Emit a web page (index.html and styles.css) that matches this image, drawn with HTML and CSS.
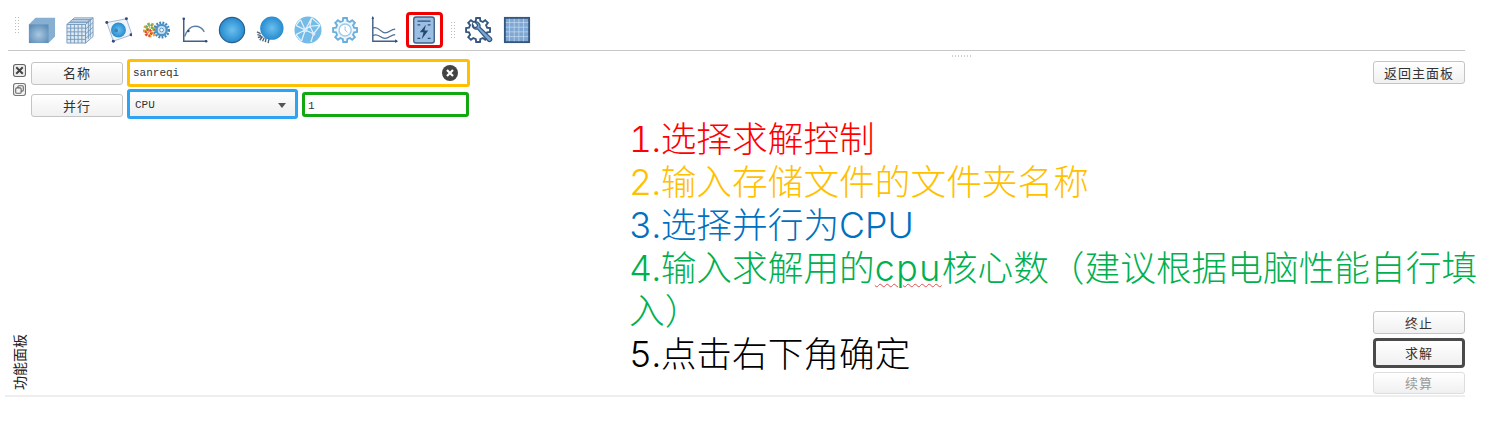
FILE: index.html
```html
<!DOCTYPE html>
<html lang="en">
<head>
  <meta charset="UTF-8">
  <meta name="viewport" content="width=device-width, initial-scale=1.0">
  <title>功能面板</title>
  <link rel="stylesheet" href="styles.css">
</head>
<body>
  <svg class="defs" width="0" height="0" aria-hidden="true">
    <defs>
      <radialGradient id="ball" cx="50%" cy="50%" r="55%">
        <stop offset="0" stop-color="#6cc0ee"/>
        <stop offset="1" stop-color="#1f86cc"/>
      </radialGradient>
      <radialGradient id="cube" cx="50%" cy="55%" r="60%">
        <stop offset="0" stop-color="#a9c8e2"/>
        <stop offset="1" stop-color="#5f8fb8"/>
      </radialGradient>
      <path id="gear" d="M23.700 12.580L26.840 12.970V17.030L23.700 17.420L22.570 20.150L24.520 22.640L21.640 25.520L19.150 23.570L16.420 24.700L16.030 27.840H11.970L11.580 24.700L8.850 23.570L6.360 25.520L3.480 22.640L5.430 20.150L4.300 17.420L1.160 17.030V12.970L4.300 12.580L5.430 9.850L3.480 7.360L6.360 4.480L8.850 6.430L11.580 5.300L11.970 2.160H16.030L16.420 5.300L19.150 6.430L21.640 4.480L24.520 7.360L22.570 9.850Z"/>
    </defs>
  </svg>

  <div class="toolbar">
    <span class="grip"></span>
    <div class="tools">
      <svg class="icon" viewBox="0 0 30 30"><path d="M1 9L8 2h21v20l-7 7H1z" fill="#86afd2"/><path d="M1 9h21v20H1z" fill="url(#cube)"/></svg>
      <svg class="icon" viewBox="0 0 30 30"><g fill="#dfeaf4" stroke="#6d93b8" stroke-width=".9"><path d="M1 9h20v20H1z"/><path d="M1 9l8-7h20l-8 7z"/><path d="M21 9l8-7v20l-8 7z"/><path d="M5 9v20M9 9v20M13 9v20M17 9v20M1 13h20M1 17h20M1 21h20M1 25h20M3 7h20M5 5.500h20M7 3.700h20M24 4.700v20M26 3v20M21 14l8-7M21 19l8-7M21 24l8-7"/></g></svg>
      <svg class="icon" viewBox="0 0 30 30"><path d="M3 7L24 3l6 17-20 7z" fill="#eef4fa" stroke="#8aa3c0" stroke-width=".8"/><circle cx="15.500" cy="15" r="8" fill="url(#ball)"/><circle cx="13" cy="15.500" r="2" fill="#3e82b8"/><g fill="#2f4d7c"><circle cx="3" cy="7" r="1.600"/><circle cx="24" cy="3" r="1.600"/><circle cx="29" cy="20" r="1.600"/><circle cx="10" cy="27" r="1.600"/></g></svg>
      <svg class="icon" viewBox="0 0 30 30"><circle cx="9" cy="15" r="5" fill="none" stroke="#e8a33a" stroke-width="6" stroke-dasharray="2 1.400"/><circle cx="8" cy="12" r="3" fill="none" stroke="#5bb65a" stroke-width="2.500" stroke-dasharray="2 1"/><circle cx="7" cy="18" r="3" fill="none" stroke="#e2483c" stroke-width="2.500" stroke-dasharray="2 1"/><circle cx="21" cy="15" r="5.500" fill="#cfe2f1" stroke="#4d94c8" stroke-width="2.500"/><circle cx="21" cy="15" r="7.800" fill="none" stroke="#3f86bd" stroke-width="2.500" stroke-dasharray="2 1.400"/><circle cx="21" cy="15" r="2" fill="#fff" stroke="#4d94c8"/></svg>
      <svg class="icon" viewBox="0 0 30 30"><path d="M4 3v24h24" fill="none" stroke="#3f6187" stroke-width="1.600"/><path d="M5 22c3-8 6-11 11-11 5 0 8 2 10 6" fill="none" stroke="#5c7ea3" stroke-width="1.400"/><circle cx="4" cy="3" r="1.400" fill="#2f4d7c"/><circle cx="28" cy="27" r="1.400" fill="#2f4d7c"/><circle cx="9" cy="16" r="1.300" fill="#2f4d7c"/></svg>
      <svg class="icon" viewBox="0 0 30 30"><circle cx="15" cy="15" r="13.500" fill="url(#ball)" stroke="#2d5f8c" stroke-width="1.300"/></svg>
      <svg class="icon" viewBox="0 0 30 30"><path d="M1 17l4 2M1.500 20l4 1M2 23l4-1M4 26l3-4M7 27l2-4M10 28l1-5M13 29l1-5" stroke="#4f6378" stroke-width="1.500" fill="none"/><circle cx="17" cy="13" r="12.500" fill="url(#ball)"/></svg>
      <svg class="icon" viewBox="0 0 30 30"><circle cx="15" cy="15" r="14.500" fill="#74bbe8"/><path d="M2 10l10 5 7-13M12 15l-4 12M12 15l9 4 7-9M21 19l-3 9M19 2l9 8M2 20l6 7M7 4l5 11M2 10l5-6M19 2l-2 9-5 4M17 11l11-1M21 19l-4-8M2 20l10-5" fill="none" stroke="#e4f2fb" stroke-width="1.300"/><circle cx="12" cy="15" r="2.500" fill="#d6ecfa"/><circle cx="21" cy="19" r="2" fill="#d6ecfa"/></svg>
      <svg class="icon" viewBox="0 0 30 30"><use href="#gear" fill="#eef6fc" stroke="#6aaedc" stroke-width="2"/><circle cx="14" cy="15" r="6.500" fill="#fff" stroke="#9ecbea" stroke-width="1.500"/><path d="M14 11v4l2.500 2.500" fill="none" stroke="#8fc0e2"/></svg>
      <svg class="icon" viewBox="0 0 30 30"><path d="M3 2v25h26" fill="none" stroke="#3f6187" stroke-width="1.500"/><path d="M3 13c6-3 8 5 13 5s6-4 11-4M3 21c6-3 8 3 13 3s6-4 11-4" fill="none" stroke="#4c6f96" stroke-width="1.400"/><path d="M27 25l3 2-3 2zM1.500 3L3 0l1.500 3z" fill="#2f4d7c"/></svg>
      <span class="tool-on">
        <svg class="icon" viewBox="0 0 30 30"><rect x="4" y="1" width="22" height="28" rx="2.500" fill="#9bbfe2" stroke="#3f6187" stroke-width="1.500"/><path d="M8 5.500h14M8 9.500h3M19 9.500h3M19 24h3M8 24h3" stroke="#2f4d7c" stroke-width="1.400"/><path d="M17 9.500L10.500 17.500h4L12.500 25l7-9.500h-4z" fill="#24466f"/></svg>
      </span>
      <span class="grip grip-mid"></span>
      <svg class="icon" viewBox="0 0 30 30"><use href="#gear" fill="#fff" stroke="#34567f" stroke-width="2"/><path d="M8 8.500a4.500 4.500 0 0 0 5.500 5.500l11 12.500a2 2 0 0 0 3.500-3L16 12a4.500 4.500 0 0 0-5.500-5.500l3 3-1 2.500-2.500.5z" fill="#7ba6d2" stroke="#34567f" stroke-width="1.300"/></svg>
      <svg class="icon" viewBox="0 0 30 30"><rect x="2" y="2" width="26" height="26" fill="#7ea7d3" stroke="#34567f" stroke-width="2"/><path d="M7 3v24M12 3v24M17 3v24M22 3v24M3 7h24M3 12h24M3 17h24M3 22h24" stroke="#c4d8ec" stroke-width=".8"/></svg>
    </div>
  </div>
  <div class="splitter"></div>

  <div class="panel">
    <div class="side">
      <div class="side-icons">
        <span class="win-btn">
          <svg viewBox="0 0 12 12"><rect x=".5" y=".5" width="11" height="11" rx="2" fill="#eee" stroke="#666"/><path d="M3 3l6 6M9 3l-6 6" stroke="#444" stroke-width="1.800"/></svg>
        </span>
        <span class="win-btn">
          <svg viewBox="0 0 12 12"><rect x=".5" y=".5" width="11" height="11" rx="2" fill="#f4f4f4" stroke="#777"/><rect x="4.500" y="2.500" width="5" height="5" rx="1" fill="none" stroke="#666"/><rect x="2.500" y="4.500" width="5" height="5" rx="1" fill="#f4f4f4" stroke="#666"/></svg>
        </span>
      </div>
      <span class="side-label">功能面板</span>
    </div>

    <div class="form">
      <div class="row">
        <button class="btn">名称</button>
        <div class="field field-name">
          <span class="value">sanreqi</span>
          <svg class="clear" viewBox="0 0 16 16"><circle cx="8" cy="8" r="8" fill="#444"/><path d="M5 5l6 6M11 5l-6 6" stroke="#fff" stroke-width="2.200"/></svg>
        </div>
      </div>
      <div class="row row-second">
        <button class="btn btn-low">并行</button>
        <div class="field field-select">
          <span class="value">CPU</span>
          <span class="caret"></span>
        </div>
        <div class="field field-cores">
          <span class="value">1</span>
        </div>
      </div>
    </div>

    <div class="actions">
      <button class="btn">返回主面板</button>
      <div class="actions-bottom">
        <button class="btn">终止</button>
        <button class="btn btn-focus">求解</button>
        <button class="btn btn-off">续算</button>
      </div>
    </div>

    <div class="notes">
      <p class="red"><span class="num">1.</span>选择求解控制</p>
      <p class="amber"><span class="num">2.</span>输入存储文件的文件夹名称</p>
      <p class="blue"><span class="num">3.</span>选择并行为CPU</p>
      <p class="green"><span class="num">4.</span>输入求解用的<span class="squiggle">cpu</span>核心数（建议根据电脑性能自行填入）</p>
      <p class="black"><span class="num">5.</span>点击右下角确定</p>
    </div>
  </div>
</body>
</html>
```

FILE: styles.css
```css
body {
  margin: 0;
  height: 422px;
  overflow: hidden;
  background: #fff;
  font-family: "Noto Sans CJK SC", sans-serif;
}

.defs {
  position: absolute;
}

.toolbar {
  display: flex;
  align-items: center;
  width: 1451px;
  height: 50px;
  margin-left: 8px;
  padding-left: 6px;
  border-bottom: 1px solid #c8c8c8;
}

.grip {
  width: 5px;
  height: 19px;
  background-image: radial-gradient(#bbb 0.8px, transparent 1px);
  background-size: 3px 3px;
}

.grip-mid {
  margin: 0 0 0 -3px;
}

.tools {
  display: flex;
  align-items: center;
  gap: 10px;
  margin-left: 9px;
  margin-top: 10px;
}

.icon {
  display: block;
  width: 28px;
  height: 28px;
}

.tool-on {
  display: block;
  padding: 1px 2px 1px 1px;
  border: 3px solid #f00000;
  border-radius: 4px;
  margin: 0 0 0 -2px;
}

.splitter {
  width: 20px;
  height: 2px;
  margin: 4px 0 0 951px;
  background-image: radial-gradient(#c4c4c4 0.7px, transparent 1px);
  background-size: 3px 2px;
}

.panel {
  position: relative;
  display: flex;
  width: 1460px;
  height: 338px;
  margin-left: 5px;
  border-bottom: 2px solid #eee;
}

.side {
  display: flex;
  flex-direction: column;
  justify-content: space-between;
  width: 26px;
  padding: 7px 0 5px 8px;
  box-sizing: border-box;
}

.side-icons {
  display: flex;
  flex-direction: column;
  gap: 7px;
}

.win-btn {
  display: block;
  width: 13px;
  height: 12px;
}

.win-btn svg {
  display: block;
}

.side-label {
  margin-left: -1px;
  writing-mode: vertical-rl;
  text-orientation: sideways;
  transform: rotate(180deg);
  font-size: 14px;
  line-height: 15px;
  color: #222;
}

.form {
  display: flex;
  flex-direction: column;
  padding-top: 2px;
}

.row {
  display: flex;
  align-items: center;
  gap: 4px;
}

.row-second {
  margin-top: 2px;
}

.btn {
  display: block;
  width: 92px;
  height: 23px;
  padding: 0;
  border: 1px solid #c4c4c4;
  border-radius: 3px;
  background: linear-gradient(#fff, #f0f0f0);
  font-family: inherit;
  font-size: 13px;
  line-height: 20px;
  letter-spacing: 1px;
  color: #333;
}

.btn-low {
  margin-top: 3px;
}

.field {
  display: flex;
  align-items: center;
  box-sizing: border-box;
  background: #fff;
  border-radius: 3px;
  padding-left: 3px;
}

.value {
  font-family: "Liberation Mono", monospace;
  font-size: 11px;
  color: #333;
}

.field-name {
  justify-content: space-between;
  width: 343px;
  height: 28px;
  border: 3px solid #ffc000;
  padding-right: 9px;
}

.clear {
  width: 16px;
  height: 16px;
}

.field-select {
  justify-content: space-between;
  width: 171px;
  height: 30px;
  border: 3px solid #2ea3f2;
  background: linear-gradient(#fff, #eee);
  padding: 2px 9px 0 5px;
}

.caret {
  border: 4px solid transparent;
  border-top: 5px solid #555;
  border-bottom: 0;
}

.field-cores {
  width: 167px;
  height: 25px;
  border: 3px solid #12a812;
  padding-top: 3px;
}

.actions {
  position: absolute;
  right: 0;
  top: 0;
  bottom: 0;
  display: flex;
  flex-direction: column;
  justify-content: space-between;
  padding-top: 4px;
}

.actions-bottom {
  display: flex;
  flex-direction: column;
  gap: 4px;
  padding-bottom: 1px;
}

.btn-focus {
  height: 30px;
  border: 3px solid #4a4a4a;
  border-radius: 4px;
}

.btn-off {
  height: 22px;
  color: #999;
  border-color: #ddd;
}

.notes {
  position: absolute;
  left: 624px;
  top: 61px;
  width: 853px;
  font-size: 35.700px;
  line-height: 43px;
  font-family: Inter, "Noto Sans CJK SC", sans-serif;
  font-weight: 300;
}

.notes p {
  margin: 0;
}

.num {
  font-variant-numeric: tabular-nums;
  letter-spacing: -0.5px;
}

.red { color: #ff0000; }
.amber { color: #ffc000; }
.blue { color: #0070c0; }
.green { color: #00b050; }
.black { color: #000; }

.squiggle {
  letter-spacing: 1.500px;
  text-decoration: underline wavy #e05050 1px;
  text-underline-offset: 2px;
}
```
